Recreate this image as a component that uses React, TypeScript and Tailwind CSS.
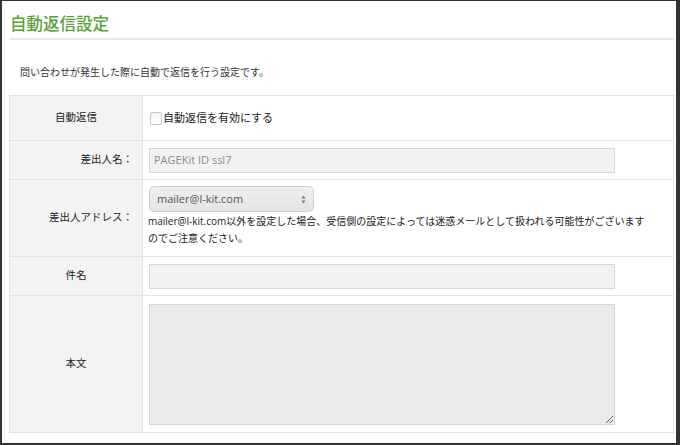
import React from "react";

const jp = { fontFamily: '"Open Sans", "Noto Sans CJK JP", sans-serif' } as React.CSSProperties;

export default function App() {
  return (
    <div
      className="w-[680px] h-[445px] bg-white border-l-2 border-t border-r-[4px] border-b-2 border-[#333] box-border overflow-hidden flex flex-col pl-[7px] pr-[2px]"
      style={jp}
    >
      <div className="pt-[11px] pb-[2px] border-b-2 border-[#e2f0d9]">
        <h1 className="text-[16.5px] leading-[24px] text-[#5ba23a] pl-[1px] font-medium">自動返信設定</h1>
      </div>
      <p className="text-[10px] leading-[14px] text-[#333] pl-[11px] mt-[25px]">
        問い合わせが発生した際に自動で返信を行う設定です。
      </p>
      <table className="mt-[16px] border-collapse w-[665px] text-[#222]">
        <tbody>
          <tr className="h-[45px]">
            <th className="w-[133px] bg-[#f3f3f3] border border-[#e2e2e2] text-[10.5px] font-normal text-center align-middle">
              自動返信
            </th>
            <td className="border border-[#e2e2e2] px-[6px] align-middle">
              <label className="flex items-center text-[11px]">
                <span className="inline-block w-[12px] h-[13px] border border-[#c8c8c8] rounded-[2px] bg-gradient-to-b from-[#f4f4f4] to-white mr-[1px] ml-[1px]"></span>
                自動返信を有効にする
              </label>
            </td>
          </tr>
          <tr className="h-[39px]">
            <th className="bg-[#f3f3f3] border border-[#e2e2e2] text-[10.5px] font-normal text-right pr-[9px] align-middle">
              差出人名：
            </th>
            <td className="border border-[#e2e2e2] px-[6px] align-middle">
              <div className="w-[466px] h-[25px] bg-[#f2f2f2] border border-[#d6d6d6] flex items-center pl-[4px] text-[11px] text-[#8a8a8a]">
                PAGEKit ID ssl7
              </div>
            </td>
          </tr>
          <tr className="h-[77px]">
            <th className="bg-[#f3f3f3] border border-[#e2e2e2] text-[10.5px] font-normal text-right pr-[9px] align-middle">
              差出人アドレス：
            </th>
            <td className="border border-[#e2e2e2] pl-[5px] pr-[6px] pt-[6px] pb-[8px] align-top">
              <div className="ml-[1px] w-[165px] h-[26px] rounded-[5px] border border-[#cfcfcf] bg-gradient-to-b from-[#efefef] to-[#e4e4e4] flex items-center justify-between pl-[7px] pr-[7px] text-[11px] text-[#555]">
                <span>mailer@l-kit.com</span>
                <svg width="5" height="9" viewBox="0 0 5 9">
                  <path d="M2.5 0.5 L4.5 3.5 L0.5 3.5 Z" fill="#777" />
                  <path d="M2.5 8.5 L4.5 5.5 L0.5 5.5 Z" fill="#777" />
                </svg>
              </div>
              <p className="text-[10px] leading-[17px] mt-[1px] text-[#222] w-[500px]">
                mailer@l-kit.com以外を設定した場合、受信側の設定によっては迷惑メールとして扱われる可能性がございますのでご注意ください。
              </p>
            </td>
          </tr>
          <tr className="h-[39px]">
            <th className="bg-[#f3f3f3] border border-[#e2e2e2] text-[10.5px] font-normal text-center align-middle">
              件名
            </th>
            <td className="border border-[#e2e2e2] px-[6px] align-middle">
              <div className="w-[466px] h-[25px] bg-[#f2f2f2] border border-[#d6d6d6]"></div>
            </td>
          </tr>
          <tr className="h-[137px]">
            <th className="bg-[#f3f3f3] border border-[#e2e2e2] text-[10.5px] font-normal text-center align-middle">
              本文
            </th>
            <td className="border border-[#e2e2e2] px-[6px] align-middle">
              <textarea
                className="block w-[466px] h-[121px] bg-[#ebebeb] border border-[#d6d6d6] outline-none"
                defaultValue=""
              />
            </td>
          </tr>
        </tbody>
      </table>
    </div>
  );
}
